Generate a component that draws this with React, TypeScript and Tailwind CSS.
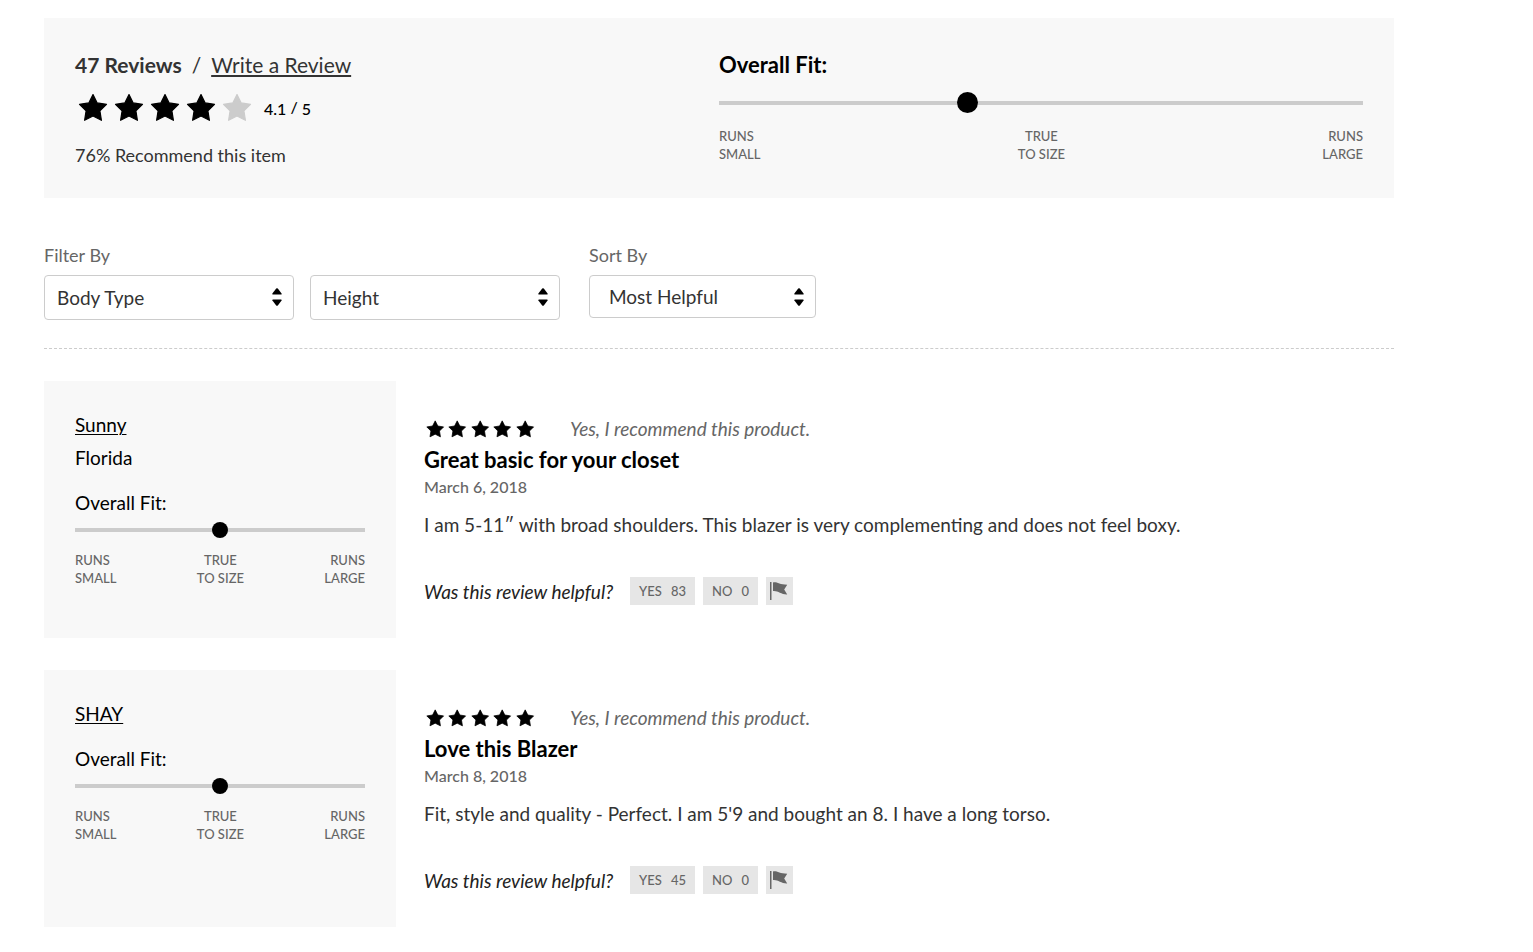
import React, { useState } from "react";
import clsx from "clsx";

interface Review {
  id: string;
  author: string;
  location?: string;
  fit: number;
  rating: number;
  title: string;
  date: string;
  body: string;
  yes: number;
  no: number;
}

const reviews: Review[] = [
  {
    id: "sunny",
    author: "Sunny",
    location: "Florida",
    fit: 50,
    rating: 5,
    title: "Great basic for your closet",
    date: "March 6, 2018",
    body: "I am 5-11″ with broad shoulders. This blazer is very complementing and does not feel boxy.",
    yes: 83,
    no: 0,
  },
  {
    id: "shay",
    author: "SHAY",
    fit: 50,
    rating: 5,
    title: "Love this Blazer",
    date: "March 8, 2018",
    body: "Fit, style and quality - Perfect. I am 5'9 and bought an 8. I have a long torso.",
    yes: 45,
    no: 0,
  },
];

const Stars = ({ rating, className }: { rating: number; className: string }) => (
  <div
    role="img"
    aria-label={`${rating} out of 5 stars`}
    className={clsx("flex shrink-0", className)}
  >
    {[...Array(5)].map((_, i) => (
      <svg
        key={i}
        viewBox="0 0 36 36"
        className={clsx("min-w-0 flex-1", i < rating ? "text-black" : "text-[#ccc]")}
      >
        <path
          d="M18 4.6 22.2 12.9 31.5 14.3 24.9 20.9 26.4 30.3 18 26 9.6 30.3 11.1 20.9 4.5 14.3 13.8 12.9Z"
          fill="currentColor"
          stroke="currentColor"
          strokeWidth="1.2"
          strokeLinejoin="round"
        />
      </svg>
    ))}
  </div>
);

interface FitScaleProps {
  id: string;
  value: number;
  large?: boolean;
}

const FitScale: React.FC<FitScaleProps> = ({ id, value, large = false }) => (
  <div>
    <label
      htmlFor={id}
      className={clsx(
        "block text-black",
        large ? "text-[22px] leading-8 font-bold" : "text-[19px] leading-7"
      )}
    >
      Overall Fit:
    </label>
    <input
      id={id}
      type="range"
      min={0}
      max={100}
      step="any"
      defaultValue={value}
      className={clsx(
        "block w-full appearance-none bg-transparent",
        "[&::-webkit-slider-runnable-track]:h-1 [&::-webkit-slider-runnable-track]:bg-[#ccc]",
        "[&::-webkit-slider-thumb]:appearance-none [&::-webkit-slider-thumb]:rounded-full [&::-webkit-slider-thumb]:bg-black",
        large
          ? "mt-[11px] h-[22px] [&::-webkit-slider-thumb]:-mt-[9px] [&::-webkit-slider-thumb]:size-[21px]"
          : "mt-[5px] h-4 [&::-webkit-slider-thumb]:-mt-[6px] [&::-webkit-slider-thumb]:size-4"
      )}
    />
    <div className="mt-[13px] flex justify-between text-[13px] leading-[18px] font-medium text-[#666] uppercase">
      <span>
        Runs
        <br />
        Small
      </span>
      <span className="text-center">
        True
        <br />
        to size
      </span>
      <span className="text-right">
        Runs
        <br />
        Large
      </span>
    </div>
  </div>
);

interface SelectBoxProps {
  id: string;
  label: string;
  options: string[];
  className: string;
}

const SelectBox: React.FC<SelectBoxProps> = ({ id, label, options, className }) => {
  const [value, setValue] = useState(options[0]);

  return (
    <div className="relative">
      <select
        id={id}
        aria-label={label}
        value={value}
        onChange={(e) => setValue(e.target.value)}
        className={clsx(
          "block appearance-none rounded-sm border border-[#ccc] bg-white pr-8 text-[19px] text-[#333]",
          className
        )}
      >
        {options.map((option) => (
          <option key={option}>{option}</option>
        ))}
      </select>
      <svg
        viewBox="0 0 10 18"
        className="pointer-events-none absolute top-[13px] right-3 h-[18px] w-[10px]"
        aria-hidden="true"
      >
        <path d="M4.2.6Q5-.2 5.8.6L9.6 5.6Q9.9 6.5 9 6.5H1Q.1 6.5.4 5.6Z" />
        <path d="M4.2 17.4Q5 18.2 5.8 17.4L9.6 12.4Q9.9 11.5 9 11.5H1Q.1 11.5.4 12.4Z" />
      </svg>
    </div>
  );
};

const FlagIcon = () => (
  <svg viewBox="0 0 18 18" className="size-[18px]" fill="#666" aria-hidden="true">
    <rect width="1.5" height="18" />
    <path d="M3 .4C7-.3 9.5 2.6 17.2 2.8L14.2 7.5 17.2 12.4C11 12.6 8 8.4 3 9Z" />
  </svg>
);

const ReviewItem = ({ review }: { review: Review }) => (
  <article className="flex">
    <div className="min-h-[257px] w-[352px] shrink-0 bg-[#f8f8f8] px-[31px] pt-[30px] text-[19px] leading-7 text-black">
      <a href="#" className="block w-fit underline decoration-1 underline-offset-2">
        {review.author}
      </a>
      {review.location && <p className="mt-[5px]">{review.location}</p>}
      <div className="mt-[17px]">
        <FitScale id={`fit-${review.id}`} value={review.fit} />
      </div>
    </div>

    <div className="min-w-0 flex-1 pt-9 pl-7">
      <div className="flex h-6 items-center">
        <Stars rating={review.rating} className="w-28" />
        <p className="pl-[34px] text-[19px] leading-6 text-[#666] italic">
          Yes, I recommend this product.
        </p>
      </div>
      <h3 className="mt-[5px] text-[22px] leading-7 font-bold text-black">{review.title}</h3>
      <p className="mt-px text-base leading-6 font-medium text-[#666]">{review.date}</p>
      <p className="mt-3 text-[19px] leading-7 text-[#333]">{review.body}</p>
      <div className="mt-[38px] flex h-7 items-center gap-2 text-[13px] font-medium text-[#666]">
        <span className="w-[198px] pt-0.5 text-[19px] leading-7 font-normal text-[#222] italic">
          Was this review helpful?
        </span>
        <button className="flex h-full w-[65px] items-center justify-between bg-[#e6e6e6] px-[9px] pt-0.5">
          <span>YES</span>
          <span>{review.yes}</span>
        </button>
        <button className="flex h-full w-[55px] items-center justify-between bg-[#e6e6e6] px-[9px] pt-0.5">
          <span>NO</span>
          <span>{review.no}</span>
        </button>
        <button
          aria-label="Flag this review"
          className="flex h-full w-[27px] items-center bg-[#e6e6e6] pl-1"
        >
          <FlagIcon />
        </button>
      </div>
    </div>
  </article>
);

const App = () => {
  return (
    <main className="mr-8 ml-11 max-w-[1350px] pt-[18px] pb-6 font-['Lato','Liberation_Sans',sans-serif] text-[#333]">
      <section className="grid grid-cols-2 bg-[#f8f8f8] p-[31px]">
        <div>
          <h2 className="flex gap-[10px] text-[21px] leading-8">
            <span className="font-bold">47 Reviews</span>
            <span>/</span>
            <a href="#" className="underline decoration-2 underline-offset-2">
              Write a Review
            </a>
          </h2>
          <div className="mt-[9px] flex h-9 items-center text-black">
            <Stars rating={4} className="w-[180px]" />
            <span className="pl-[9px] text-base font-medium">
              4.1 <span className="align-[2px]">/</span> 5
            </span>
          </div>
          <p className="mt-[17px] text-lg leading-6">76% Recommend this item</p>
        </div>
        <FitScale id="fit-overall" value={38.2} large />
      </section>

      <section className="flex gap-[29px] border-b border-dashed border-[#ccc] pt-[45px] pb-7 text-lg leading-6 text-[#666]">
        <div>
          <p>Filter By</p>
          <div className="mt-2 flex gap-4">
            <SelectBox
              id="body-type"
              label="Body Type"
              options={["Body Type", "Athletic", "Curvy", "Petite", "Slender"]}
              className="h-[45px] w-[250px] pl-3"
            />
            <SelectBox
              id="height"
              label="Height"
              options={["Height", "Under 5'4", "5'4 to 5'8", "Over 5'8"]}
              className="h-[45px] w-[250px] pl-3"
            />
          </div>
        </div>
        <div>
          <label htmlFor="sort">Sort By</label>
          <div className="mt-2">
            <SelectBox
              id="sort"
              label="Sort By"
              options={["Most Helpful", "Newest", "Highest Rated", "Lowest Rated"]}
              className="h-[43px] w-[227px] pl-[19px]"
            />
          </div>
        </div>
      </section>

      <div className="flex flex-col gap-8 pt-8">
        {reviews.map((review) => (
          <ReviewItem key={review.id} review={review} />
        ))}
      </div>
    </main>
  );
};

export default App;
